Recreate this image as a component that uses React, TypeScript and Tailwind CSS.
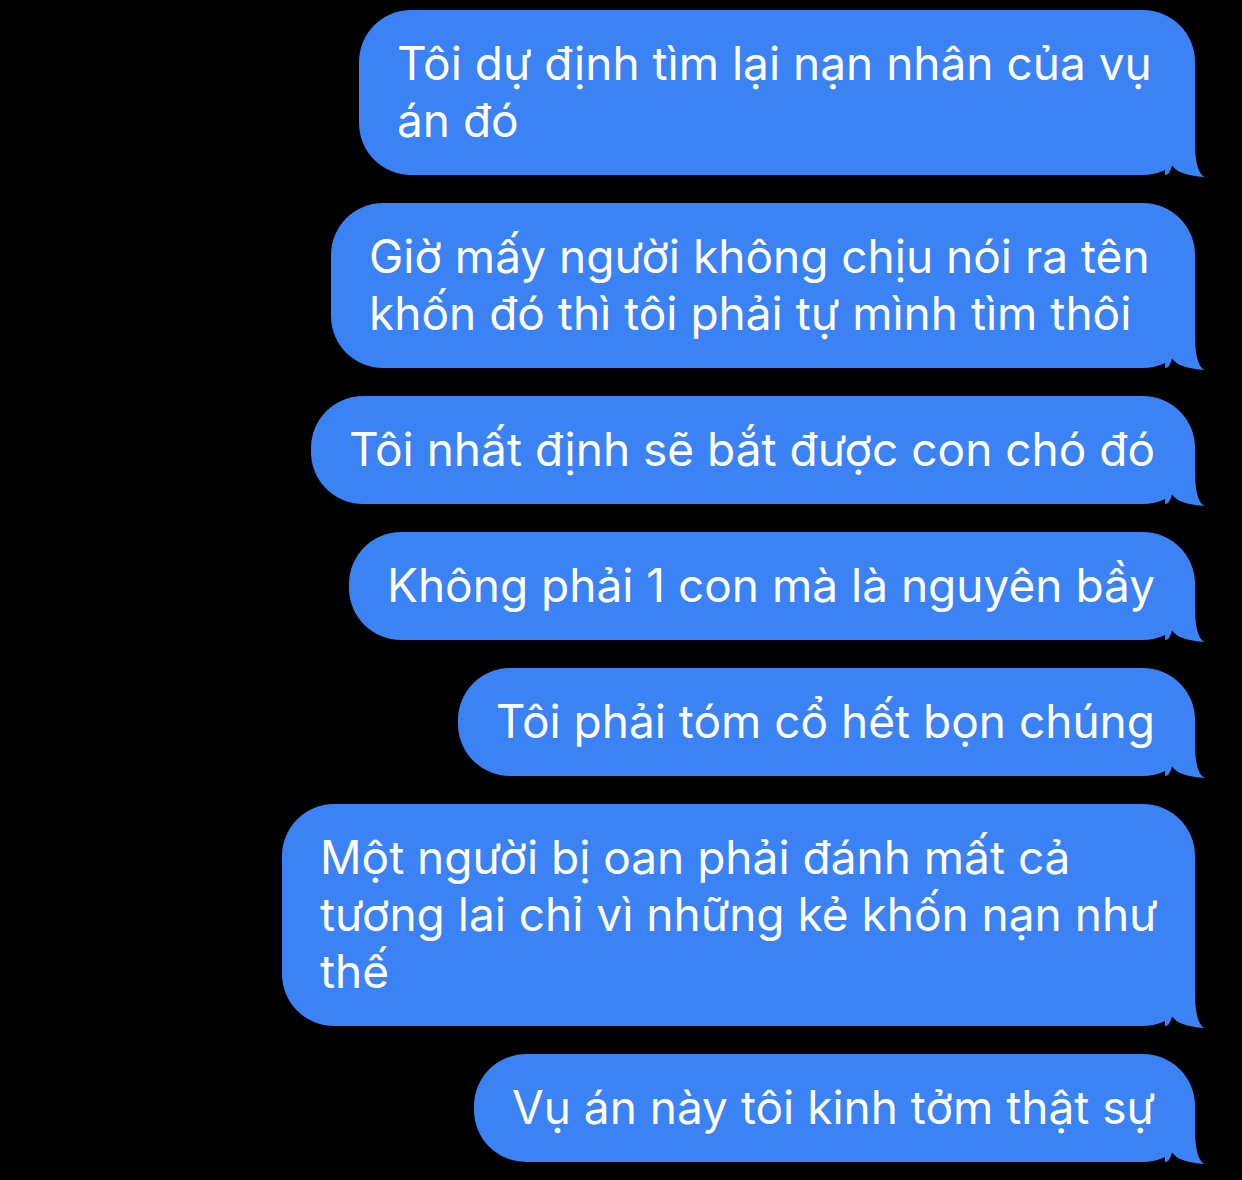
import React from "react";

const Tail = () => (
  <svg
    className="absolute right-[-10px] bottom-[-2px]"
    width="40"
    height="60"
    viewBox="0 0 40 60"
  >
    <path d="M0,58 Q5,58 7,48 Q12,58 40,60 Q31,57 30,30 L30,0 L0,0 Z" fill="#3b82f4" />
  </svg>
);

const Bubble = ({ children, w }: { children: React.ReactNode; w?: string }) => (
  <div
    className={`relative bg-[#3b82f4] text-white rounded-[52px] pl-[38px] pr-[40px] pt-[25px] pb-[26px] text-[46px] leading-[57px] whitespace-nowrap ${w ?? ""}`}
  >
    <Tail />
    <div className="relative">{children}</div>
  </div>
);

export default function App() {
  return (
    <div
      className="w-[1242px] h-[1180px] bg-black flex flex-col items-end gap-[28px] pt-[10px] pr-[47px] overflow-hidden"
      style={{ fontFamily: "Inter, 'Noto Sans', sans-serif" }}
    >
      <Bubble w="w-[836px]">
        Tôi dự định tìm lại nạn nhân của vụ
        <br />
        án đó
      </Bubble>
      <Bubble w="w-[864px]">
        Giờ mấy người không chịu nói ra tên
        <br />
        khốn đó thì tôi phải tự mình tìm thôi
      </Bubble>
      <Bubble>Tôi nhất định sẽ bắt được con chó đó</Bubble>
      <Bubble>Không phải 1 con mà là nguyên bầy</Bubble>
      <Bubble>Tôi phải tóm cổ hết bọn chúng</Bubble>
      <Bubble w="w-[913px]">
        Một người bị oan phải đánh mất cả
        <br />
        tương lai chỉ vì những kẻ khốn nạn như
        <br />
        thế
      </Bubble>
      <Bubble>Vụ án này tôi kinh tởm thật sự</Bubble>
    </div>
  );
}
